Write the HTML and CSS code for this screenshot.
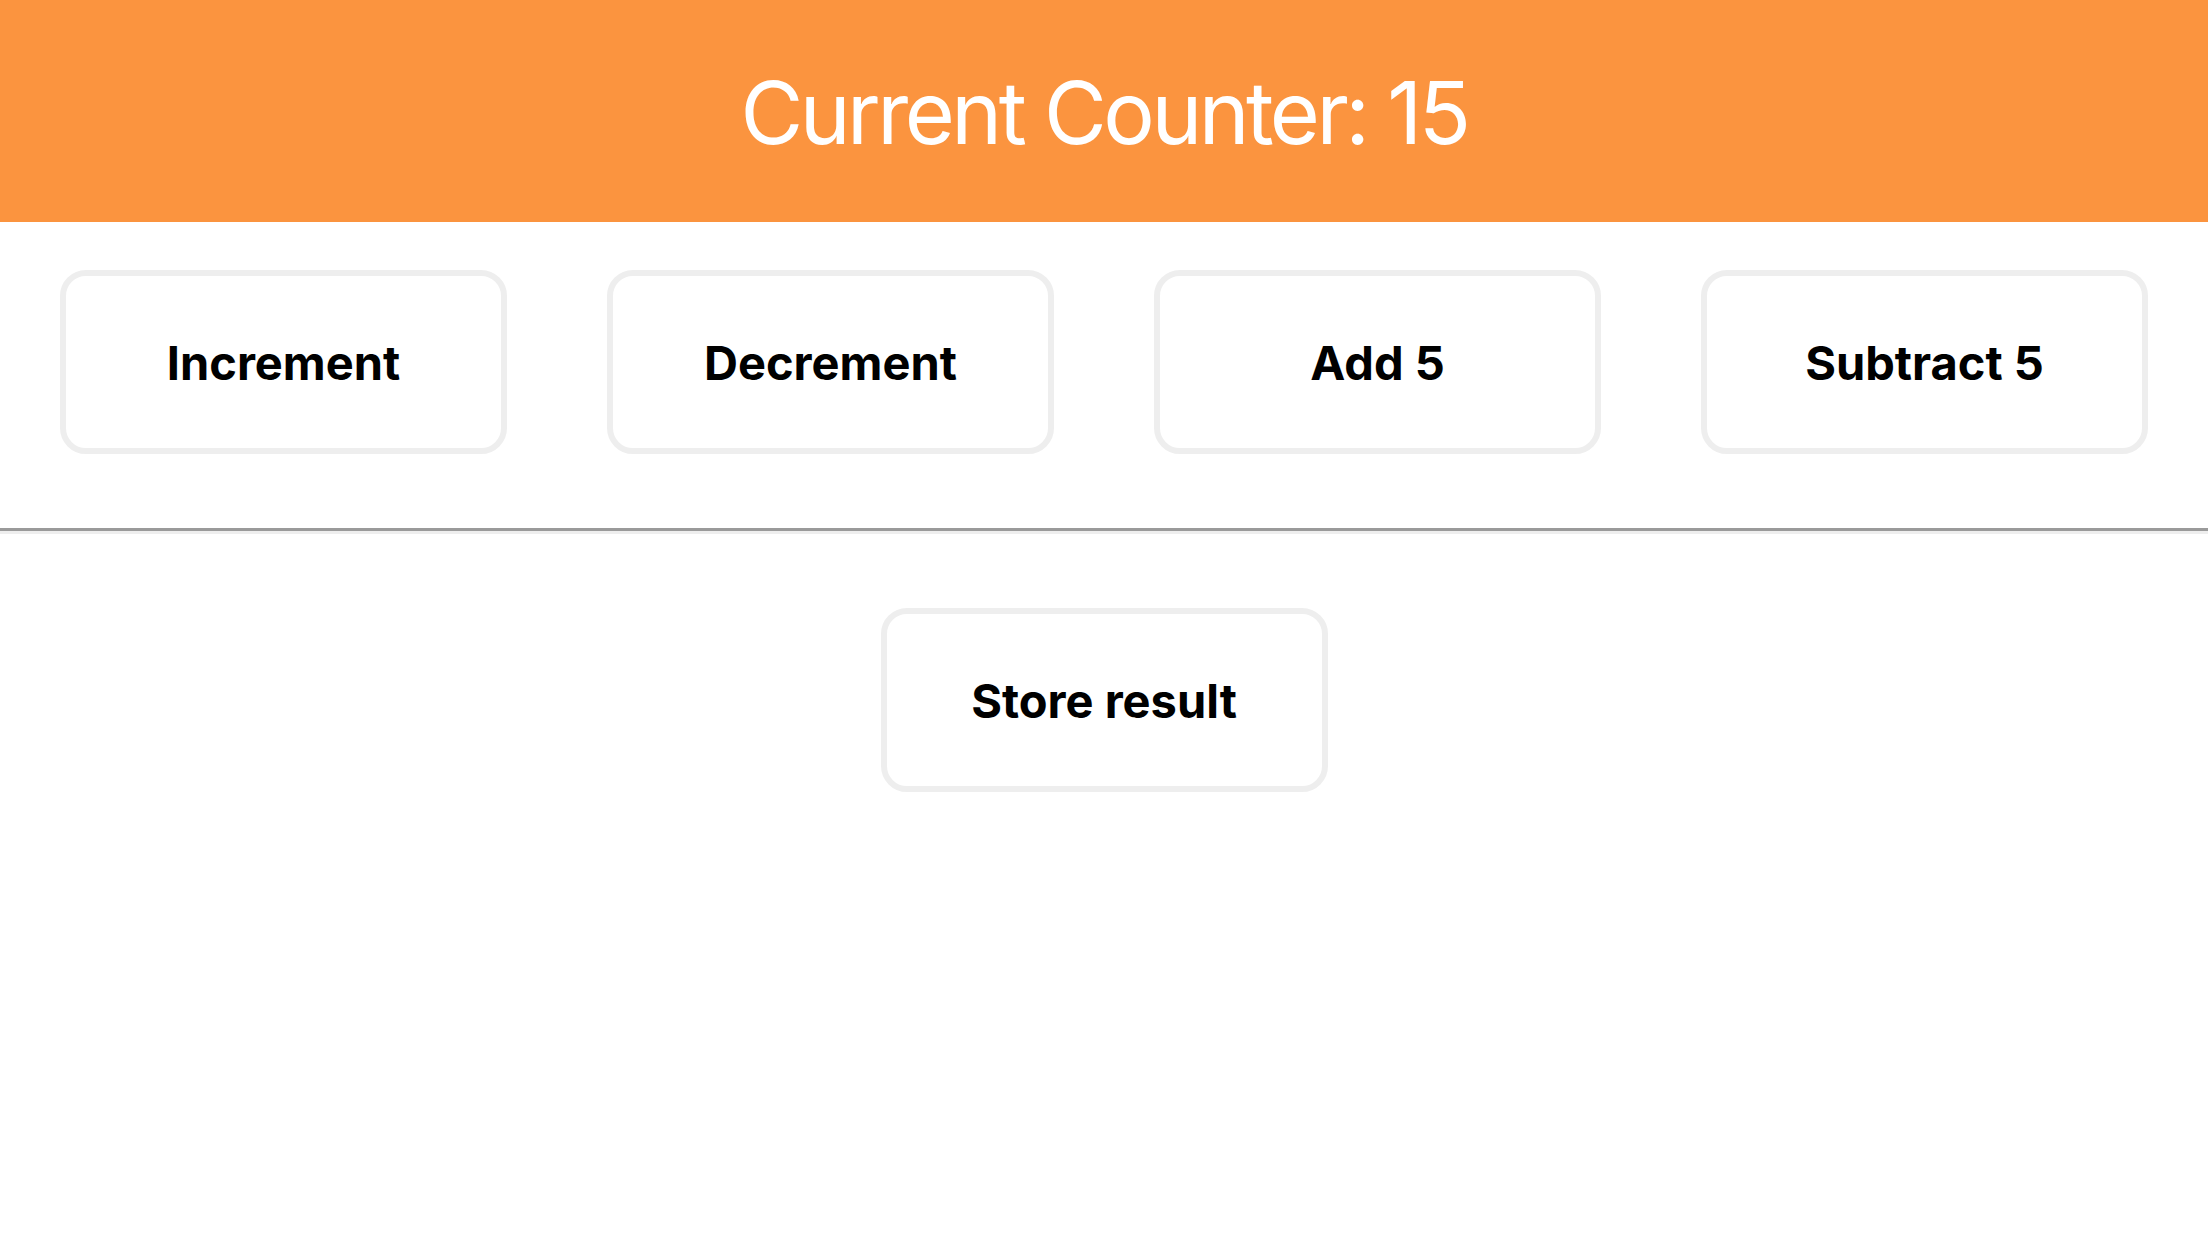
FILE: index.html
```html
<!DOCTYPE html>
<html>
<head>
<meta charset="utf-8">
<link rel="stylesheet" href="styles.css">
</head>
<body>
  <header class="header">
    <h1 class="title">Current Counter: 15</h1>
  </header>
  <div class="actions">
    <button class="btn">Increment</button>
    <button class="btn">Decrement</button>
    <button class="btn">Add 5</button>
    <button class="btn">Subtract 5</button>
  </div>
  <hr class="divider">
  <div class="store">
    <button class="btn">Store result</button>
  </div>
</body>
</html>
```

FILE: styles.css
```css
html, body {
  margin: 0;
  padding: 0;
  background: #ffffff;
}
body {
  font-family: Inter, "Liberation Sans", sans-serif;
}
.header {
  height: 222px;
  background: #fb943f;
  display: flex;
  align-items: center;
  justify-content: center;
}
.title {
  margin: 0;
  color: #ffffff;
  font-weight: 400;
  font-size: 86px;
  line-height: 1;
  letter-spacing: -3.5px;
  position: relative;
  top: 2px;
}
.actions {
  display: flex;
  padding: 0 10px;
}
.btn {
  box-sizing: border-box;
  width: 447px;
  height: 184px;
  margin: 48px 50px;
  border: 6px solid #eeeeee;
  border-radius: 26px;
  background: #ffffff;
  color: #000000;
  font-family: Inter, "Liberation Sans", sans-serif;
  font-weight: 700;
  font-size: 47px;
  padding: 0;
}
.actions .btn {
  flex: 1 1 0;
}
.divider {
  margin: 26px 0;
  height: 0;
  border: none;
  border-top: 3px solid #9a9a9a;
  border-bottom: 3px solid #eeeeee;
}
.store {
  display: flex;
  justify-content: center;
}
```
